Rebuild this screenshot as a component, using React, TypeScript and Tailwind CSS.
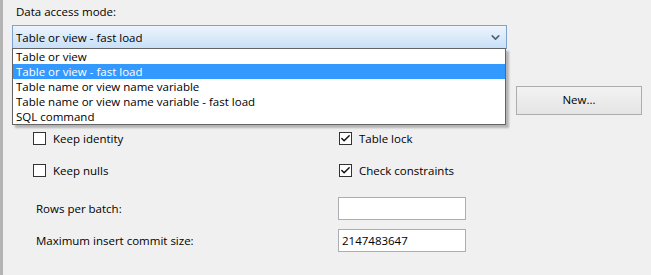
import { Check, ChevronDown } from 'lucide-react';

const options = [
  'Table or view',
  'Table or view - fast load',
  'Table name or view name variable',
  'Table name or view name variable - fast load',
  'SQL command',
];

const selected = 1;

function CheckBox({ label, checked }: { label: string; checked?: boolean }) {
  return (
    <label className="flex h-[14px] items-center gap-[7px]">
      <span className="flex h-[13px] w-[13px] items-center justify-center border border-[#333333] bg-white">
        {checked && <Check size={11} strokeWidth={3.2} className="text-[#111]" />}
      </span>
      <span>{label}</span>
    </label>
  );
}

function TextBox({ value }: { value?: string }) {
  return (
    <div className="flex h-[23px] w-[128px] items-center border border-[#abadb3] bg-white px-[3px]">
      {value}
    </div>
  );
}

export default function App() {
  return (
    <div
      className="relative h-[275px] w-[651px] overflow-hidden border-l-[3px] border-l-[#b4b4b4] bg-[#f0f0f0] text-[11.5px] leading-[15px] text-black"
      style={{ fontFamily: '"Open Sans", "Noto Sans", sans-serif' }}
    >
      <div className="pl-[13px] pt-[4px]">Data access mode:</div>

      {/* Combo + dropdown */}
      <div className="relative ml-[9px] mt-[6px] w-[495px]">
        <div className="flex h-[24px] items-center justify-between border border-[#7da2ce] bg-gradient-to-b from-[#ecf4fc] to-[#c9e0f7] pl-[3px] pr-[4px]">
          <span>{options[selected]}</span>
          <ChevronDown size={13} strokeWidth={3} className="text-[#4d6185]" />
        </div>

        <div className="absolute left-0 top-[23px] z-10 w-[494px] border border-[#646464] bg-white shadow-[3px_3px_2px_rgba(0,0,0,0.25)]">
          {options.map((o, i) => (
            <div
              key={o}
              className={`h-[15px] overflow-hidden pl-[3px] ${i === selected ? 'bg-[#3399ff] text-white' : ''}`}
            >
              {o}
            </div>
          ))}
        </div>
      </div>

      <div className="flex justify-end pr-[9px] pt-[37px]">
        <button className="h-[29px] w-[126px] border border-[#adadad] bg-gradient-to-b from-[#f2f2f2] to-[#e5e5e5] pb-[2px]">
          New...
        </button>
      </div>

      <div className="mt-[16px] grid grid-cols-[306px_1fr] gap-y-[18px] pl-[30px]">
        <CheckBox label="Keep identity" />
        <CheckBox label="Table lock" checked />
        <CheckBox label="Keep nulls" />
        <CheckBox label="Check constraints" checked />
      </div>

      <div className="mt-[20px] grid grid-cols-[302px_1fr] items-center gap-y-[9px] pl-[33px]">
        <span>Rows per batch:</span>
        <TextBox />
        <span>Maximum insert commit size:</span>
        <TextBox value="2147483647" />
      </div>
    </div>
  );
}
